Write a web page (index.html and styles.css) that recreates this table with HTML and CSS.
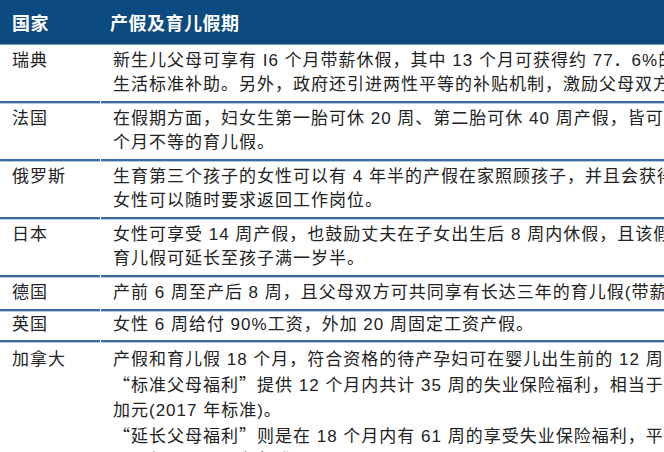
FILE: index.html
```html
<!DOCTYPE html>
<html lang="zh-CN">
<head>
<meta charset="utf-8">
<title>各国产假及育儿假期</title>
<link rel="stylesheet" href="styles.css">
</head>
<body>
<div class="table">
  <div class="head">
    <div class="c1">国家</div>
    <div class="c2">产假及育儿假期</div>
  </div>
  <div class="row">
    <div class="c1">瑞典</div>
    <div class="c2">新生儿父母可享有 I6 个月带薪休假，其中 13 个月可获得约 77．6%的工资作为<br>生活标准补助。另外，政府还引进两性平等的补贴机制，激励父母双方共同休假。</div>
  </div>
  <div class="row">
    <div class="c1">法国</div>
    <div class="c2">在假期方面，妇女生第一胎可休 20 周、第二胎可休 40 周产假，皆可享受 6 至 36<br>个月不等的育儿假。</div>
  </div>
  <div class="row">
    <div class="c1">俄罗斯</div>
    <div class="c2">生育第三个孩子的女性可以有 4 年半的产假在家照顾孩子，并且会获得相应补贴，<br>女性可以随时要求返回工作岗位。</div>
  </div>
  <div class="row">
    <div class="c1">日本</div>
    <div class="c2">女性可享受 14 周产假，也鼓励丈夫在子女出生后 8 周内休假，且该假期内的<br>育儿假可延长至孩子满一岁半。</div>
  </div>
  <div class="row">
    <div class="c1">德国</div>
    <div class="c2">产前 6 周至产后 8 周，且父母双方可共同享有长达三年的育儿假(带薪休假)。</div>
  </div>
  <div class="row tight">
    <div class="c1">英国</div>
    <div class="c2">女性 6 周给付 90%工资，外加 20 周固定工资产假。</div>
  </div>
  <div class="row last">
    <div class="c1">加拿大</div>
    <div class="c2">产假和育儿假 18 个月，符合资格的待产孕妇可在婴儿出生前的 12 周开始休假，<br><span class="q">“</span>标准父母福利<span class="q">”</span>提供 12 个月内共计 35 周的失业保险福利，相当于每周最高 543<br>加元(2017 年标准)。<br><span class="q">“</span>延长父母福利<span class="q">”</span>则是在 18 个月内有 61 周的享受失业保险福利，平均每周最高<br>326 加元(2017 年标准)。</div>
  </div>
</div>
</body>
</html>
```

FILE: styles.css
```css
html, body {
  margin: 0;
  padding: 0;
  background: #ffffff;
  overflow: hidden;
}

.table {
  width: 960px;
  font-family: "Liberation Sans", "Noto Sans CJK SC", sans-serif;
  font-size: 17px;
  letter-spacing: 1px;
  color: #222222;
}

.q {
  font-family: "Noto Sans CJK SC", sans-serif;
}

.head {
  display: flex;
  height: 44px;
  align-items: center;
  background: #0c4a7f;
  border-bottom: 1px solid #6f9cc6;
  color: #ffffff;
  font-family: "Noto Sans CJK SC", sans-serif;
  font-weight: 700;
  font-size: 18px;
  letter-spacing: 0.5px;
}

.head .c1 {
  width: 100px;
  padding-left: 12px;
  box-sizing: border-box;
}

.head .c2 {
  padding-left: 10px;
}

.row {
  display: flex;
  gap: 1px;
}

.row .c1,
.row .c2 {
  box-sizing: border-box;
  padding: 4px 0 4px 12px;
  line-height: 24px;
  border-bottom: 2px solid #3c6c9f;
  box-shadow: 0 1px 0 #b3c9e0;
  white-space: nowrap;
}

.row.tight .c1,
.row.tight .c2 {
  padding-top: 2px;
  padding-bottom: 3px;
}

.row.last .c1,
.row.last .c2 {
  padding-top: 6px;
  line-height: 24.3px;
}

.row .c1 {
  width: 100px;
  flex: none;
}

.row .c2 {
  flex: 1;
}
```
